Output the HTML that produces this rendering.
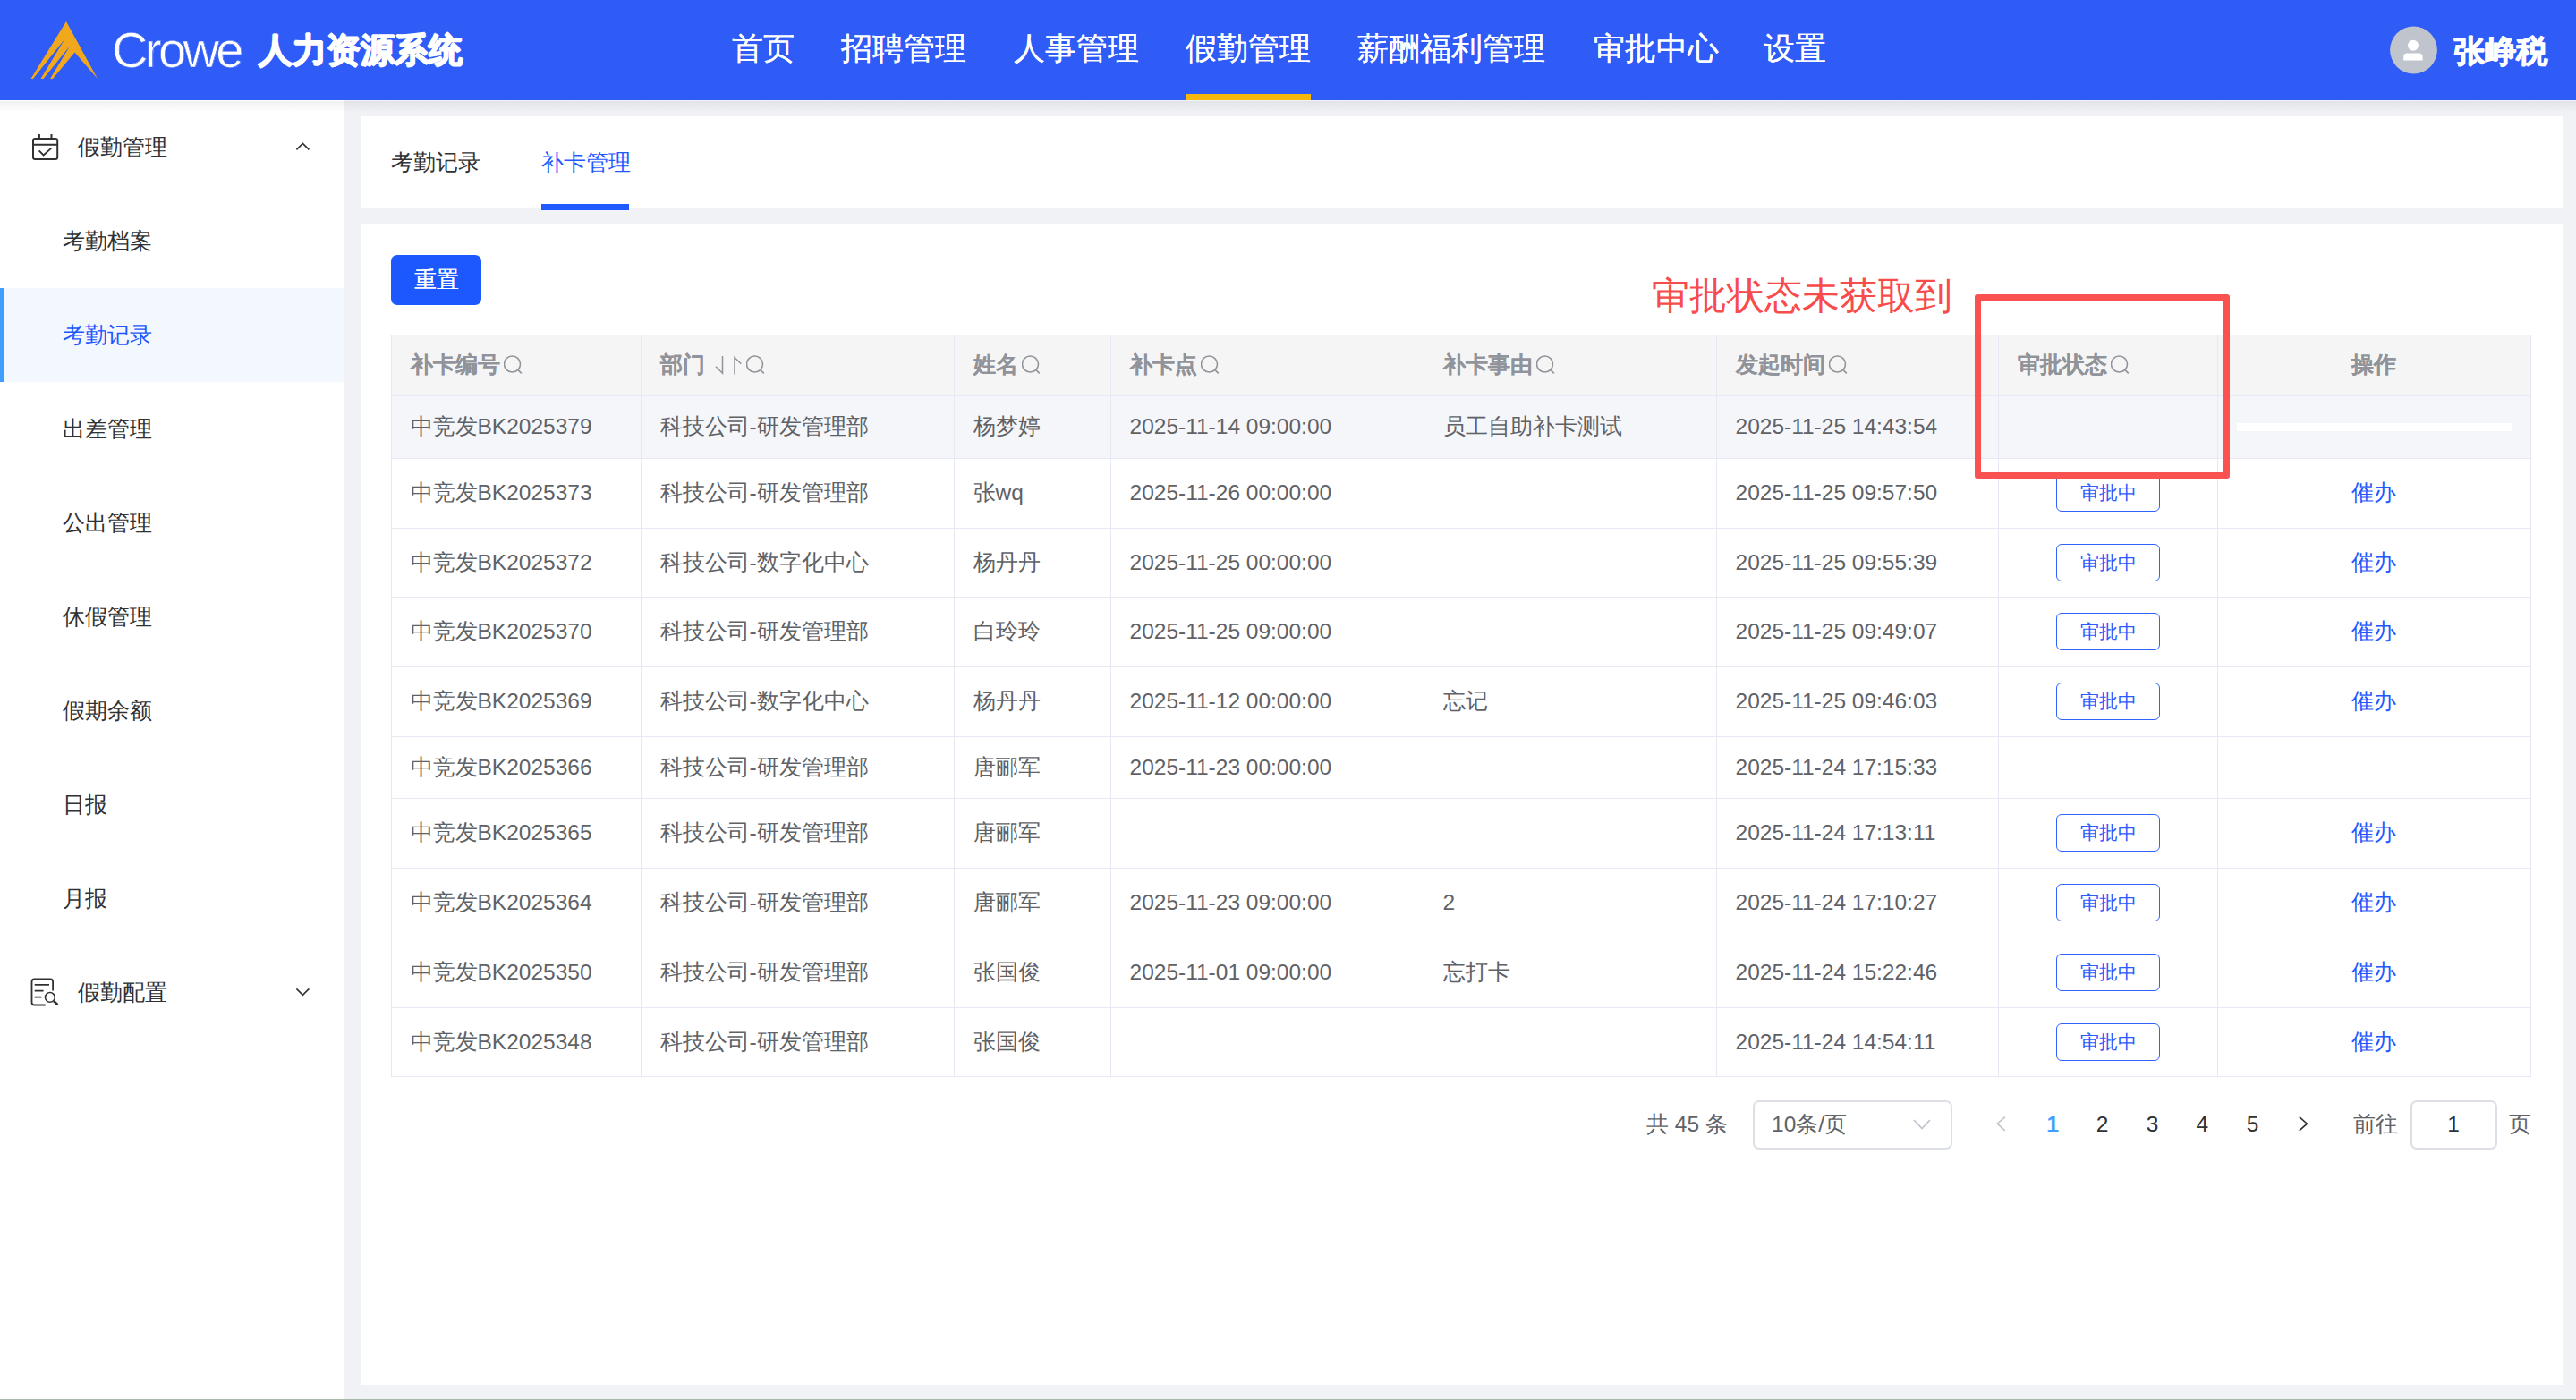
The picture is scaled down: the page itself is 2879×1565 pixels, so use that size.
<!DOCTYPE html>
<html><head><meta charset="utf-8">
<style>
*{margin:0;padding:0;box-sizing:border-box}
html,body{width:2879px;height:1565px;overflow:hidden}
body{position:relative;background:#f0f2f5;font-family:"Liberation Sans",sans-serif;color:#606266}
.abs{position:absolute}
#hdr{position:absolute;left:0;top:0;width:2879px;height:112px;background:#2f5bf6}
#hdrsh{position:absolute;left:384px;top:113px;width:2495px;height:13px;background:linear-gradient(#e2e4e8,#f0f2f5)}
#hdrsh2{position:absolute;left:0;top:113px;width:384px;height:12px;background:linear-gradient(#f0f0f0,#fff)}
.nav{position:absolute;top:0;height:112px;line-height:108px;font-size:35px;color:#fff;white-space:nowrap;text-shadow:0.3px 0 #fff}
#side{position:absolute;left:0;top:112px;width:384px;height:1453px;background:#fff}
.si{position:absolute;left:0;width:384px;height:105px;line-height:105px;font-size:24.5px;color:#303133;white-space:nowrap}
.card{position:absolute;left:403px;width:2461px;background:#fff}
.hl{position:absolute;height:1px;background:#e6e9f3}
.vl{position:absolute;width:1px;background:#e6e9f3}
.th{position:absolute;font-size:24.5px;font-weight:bold;color:#909399;white-space:nowrap;text-shadow:0.4px 0 #909399}
.th svg{position:relative;vertical-align:middle;top:-2px;margin-left:4px}
.td{position:absolute;font-size:24.5px;color:#606266;white-space:nowrap}
.lnk{color:#1f58ff}
.pg{position:absolute;top:1229px;height:55px;line-height:55px;font-size:24.5px;color:#606266;white-space:nowrap}
.pn{width:56px;text-align:center;color:#303133}
.tag{position:absolute;width:116px;height:42px;border:1px solid #2f62ff;border-radius:6px;background:#fff;color:#2c5bff;font-size:21px;line-height:40px;text-align:center}
</style></head><body>
<div id="hdr">
  <svg class="abs" style="left:0;top:0" width="120" height="112" viewBox="0 0 120 112">
    <polygon fill="#f2a81d" points="74,24 109,88 83.5,58.5 59,88 56,88 78,51.5 48.5,88 45.5,88 72.5,43.5 37,88 34.5,88"/>
  </svg>
  <div class="nav" style="left:125px;font-size:56px;letter-spacing:-3.6px;line-height:112px;-webkit-text-stroke:0.7px #2f5bf6">Crowe</div>
  <div class="nav" style="left:289px;font-size:37.5px;font-weight:bold;line-height:112px;text-shadow:0.6px 0 #fff,-0.6px 0 #fff,0 0.6px #fff,0 -0.6px #fff">人力资源系统</div>
  <div class="nav" style="left:818px">首页</div>
  <div class="nav" style="left:940px">招聘管理</div>
  <div class="nav" style="left:1133px">人事管理</div>
  <div class="nav" style="left:1325px">假勤管理</div>
  <div class="abs" style="left:1325px;top:105px;width:140px;height:7px;background:#f7b80c"></div>
  <div class="nav" style="left:1517px">薪酬福利管理</div>
  <div class="nav" style="left:1781px">审批中心</div>
  <div class="nav" style="left:1971px">设置</div>
  <svg class="abs" style="left:2670px;top:29px" width="56" height="56" viewBox="0 0 56 56"><circle cx="27.5" cy="27" r="26.4" fill="#c0c4cc"/><circle cx="27" cy="21.8" r="6" fill="#fff"/><path d="M16.2 38.5V34.5A4 4 0 0 1 20.2 30.4H33.6A4 4 0 0 1 37.6 34.5V38.5Z" fill="#fff"/></svg>
  <div class="nav" style="left:2742px;font-weight:bold;font-size:34.5px;line-height:115px;text-shadow:0.5px 0 #fff,-0.5px 0 #fff,0 0.5px #fff">张峥税</div>
</div>

<div id="side">
  <div class="si" style="top:0"><svg class="abs" style="left:25px;top:23px" width="60" height="60" viewBox="0 0 60 60"><rect x="12" y="20" width="27.2" height="23" rx="2.2" fill="none" stroke="#303133" stroke-width="2"/><path d="M12 26.8H39.2M18.9 15V20M32.5 15V20" stroke="#303133" stroke-width="2" fill="none"/><path d="M18.6 33.4L23.6 38.4L32.4 30.6" stroke="#303133" stroke-width="1.9" fill="none"/></svg><span style="position:absolute;left:87px">假勤管理</span><svg class="abs" style="left:320px;top:33px" width="40" height="40" viewBox="0 0 40 40"><path d="M11.4 22.4L18.4 15.4L25.4 22.4" stroke="#303133" stroke-width="1.6" fill="none"/></svg></div>
  <div class="si" style="top:105px"><span style="position:absolute;left:70px">考勤档案</span></div>
  <div class="si" style="top:210px;background:#f3f7fe;color:#1f56ff"><div class="abs" style="left:0;top:0;width:4px;height:105px;background:#409eff"></div><span style="position:absolute;left:70px">考勤记录</span></div>
  <div class="si" style="top:315px"><span style="position:absolute;left:70px">出差管理</span></div>
  <div class="si" style="top:420px"><span style="position:absolute;left:70px">公出管理</span></div>
  <div class="si" style="top:525px"><span style="position:absolute;left:70px">休假管理</span></div>
  <div class="si" style="top:630px"><span style="position:absolute;left:70px">假期余额</span></div>
  <div class="si" style="top:735px"><span style="position:absolute;left:70px">日报</span></div>
  <div class="si" style="top:840px"><span style="position:absolute;left:70px">月报</span></div>
  <div class="si" style="top:945px"><svg class="abs" style="left:25px;top:23px" width="60" height="60" viewBox="0 0 60 60"><path d="M34.1 27.6V17.5A3 3 0 0 0 31.1 14.5H13.5A3 3 0 0 0 10.5 17.5V40.5A3 3 0 0 0 13.5 43.5H25.7" stroke="#303133" stroke-width="1.8" fill="none"/><path d="M13.7 20.8H30M13.7 27.6H23.6M13.7 34.7H21.4" stroke="#303133" stroke-width="1.8" fill="none"/><circle cx="30.9" cy="34.9" r="5.4" fill="none" stroke="#303133" stroke-width="1.6"/><path d="M35 39L39.5 43.2" stroke="#303133" stroke-width="2.6" fill="none"/></svg><span style="position:absolute;left:87px">假勤配置</span><svg class="abs" style="left:320px;top:33px" width="40" height="40" viewBox="0 0 40 40"><path d="M11.4 15.4L18.4 22.4L25.4 15.4" stroke="#303133" stroke-width="1.6" fill="none"/></svg></div>
</div>
<div id="hdrsh"></div><div id="hdrsh2"></div>
<div class="card" style="top:130px;height:103px">
  <div class="abs" style="left:34px;top:0;height:103px;line-height:103px;font-size:24.5px;color:#303133">考勤记录</div>
  <div class="abs" style="left:202px;top:0;height:103px;line-height:103px;font-size:24.5px;color:#1f58ff">补卡管理</div>
  <div class="abs" style="left:202px;top:98px;width:98px;height:7px;background:#1f5bff"></div>
</div>
<div class="card" style="top:250px;height:1298px">
  <div class="abs" style="left:34px;top:35px;width:101px;height:56px;border-radius:7px;background:#1d57fe;color:#fff;font-size:24.5px;line-height:56px;text-align:center;text-shadow:0.5px 0 #fff">重置</div>
</div>
<div class="abs" style="left:437px;top:374px;width:2392px;height:830px;background:#fff"></div>
<div class="abs" style="left:437px;top:374px;width:2391px;height:68px;background:#f5f5f5"></div>
<div class="abs" style="left:437px;top:442px;width:2391px;height:70px;background:#f5f6fa"></div>
<div class="hl" style="top:374px;left:437px;width:2392px"></div>
<div class="hl" style="top:442px;left:437px;width:2392px"></div>
<div class="hl" style="top:512px;left:437px;width:2392px"></div>
<div class="hl" style="top:590px;left:437px;width:2392px"></div>
<div class="hl" style="top:667px;left:437px;width:2392px"></div>
<div class="hl" style="top:745px;left:437px;width:2392px"></div>
<div class="hl" style="top:823px;left:437px;width:2392px"></div>
<div class="hl" style="top:892px;left:437px;width:2392px"></div>
<div class="hl" style="top:970px;left:437px;width:2392px"></div>
<div class="hl" style="top:1048px;left:437px;width:2392px"></div>
<div class="hl" style="top:1126px;left:437px;width:2392px"></div>
<div class="hl" style="top:1203px;left:437px;width:2392px"></div>
<div class="vl" style="left:437px;top:374px;height:830px"></div>
<div class="vl" style="left:716px;top:374px;height:830px"></div>
<div class="vl" style="left:1066px;top:374px;height:830px"></div>
<div class="vl" style="left:1241px;top:374px;height:830px"></div>
<div class="vl" style="left:1591px;top:374px;height:830px"></div>
<div class="vl" style="left:1918px;top:374px;height:830px"></div>
<div class="vl" style="left:2233px;top:374px;height:830px"></div>
<div class="vl" style="left:2478px;top:374px;height:830px"></div>
<div class="vl" style="left:2828px;top:374px;height:830px"></div>
<div class="th" style="left:458.5px;top:374px;height:68px;line-height:68px">补卡编号<svg class="srch" width="22" height="24" viewBox="0 0 22 24"><circle cx="9.5" cy="11" r="9" fill="none" stroke="#909399" stroke-width="1.55"/><path d="M16 17.6 L19.8 21.3" stroke="#909399" stroke-width="1.7" fill="none"/></svg></div>
<div class="th" style="left:737.5px;top:374px;height:68px;line-height:68px">部门<svg class="sort" width="38" height="24" viewBox="0 0 38 24"><path d="M15.5 2 V21.3 L8 13.8" stroke="#909399" stroke-width="1.5" fill="none"/><path d="M29 22.5 V3.5 L36.3 10.8" stroke="#909399" stroke-width="1.5" fill="none"/></svg><svg class="srch" width="22" height="24" viewBox="0 0 22 24"><circle cx="9.5" cy="11" r="9" fill="none" stroke="#909399" stroke-width="1.55"/><path d="M16 17.6 L19.8 21.3" stroke="#909399" stroke-width="1.7" fill="none"/></svg></div>
<div class="th" style="left:1087.5px;top:374px;height:68px;line-height:68px">姓名<svg class="srch" width="22" height="24" viewBox="0 0 22 24"><circle cx="9.5" cy="11" r="9" fill="none" stroke="#909399" stroke-width="1.55"/><path d="M16 17.6 L19.8 21.3" stroke="#909399" stroke-width="1.7" fill="none"/></svg></div>
<div class="th" style="left:1262.5px;top:374px;height:68px;line-height:68px">补卡点<svg class="srch" width="22" height="24" viewBox="0 0 22 24"><circle cx="9.5" cy="11" r="9" fill="none" stroke="#909399" stroke-width="1.55"/><path d="M16 17.6 L19.8 21.3" stroke="#909399" stroke-width="1.7" fill="none"/></svg></div>
<div class="th" style="left:1612.5px;top:374px;height:68px;line-height:68px">补卡事由<svg class="srch" width="22" height="24" viewBox="0 0 22 24"><circle cx="9.5" cy="11" r="9" fill="none" stroke="#909399" stroke-width="1.55"/><path d="M16 17.6 L19.8 21.3" stroke="#909399" stroke-width="1.7" fill="none"/></svg></div>
<div class="th" style="left:1939.5px;top:374px;height:68px;line-height:68px">发起时间<svg class="srch" width="22" height="24" viewBox="0 0 22 24"><circle cx="9.5" cy="11" r="9" fill="none" stroke="#909399" stroke-width="1.55"/><path d="M16 17.6 L19.8 21.3" stroke="#909399" stroke-width="1.7" fill="none"/></svg></div>
<div class="th" style="left:2254.5px;top:374px;height:68px;line-height:68px">审批状态<svg class="srch" width="22" height="24" viewBox="0 0 22 24"><circle cx="9.5" cy="11" r="9" fill="none" stroke="#909399" stroke-width="1.55"/><path d="M16 17.6 L19.8 21.3" stroke="#909399" stroke-width="1.7" fill="none"/></svg></div>
<div class="th" style="left:2478px;width:350px;top:374px;height:68px;line-height:68px;text-align:center">操作</div>
<div class="td" style="left:458.5px;top:442px;height:70px;line-height:70px">中竞发BK2025379</div>
<div class="td" style="left:737.5px;top:442px;height:70px;line-height:70px">科技公司-研发管理部</div>
<div class="td" style="left:1087.5px;top:442px;height:70px;line-height:70px">杨梦婷</div>
<div class="td" style="left:1262.5px;top:442px;height:70px;line-height:70px">2025-11-14 09:00:00</div>
<div class="td" style="left:1612.5px;top:442px;height:70px;line-height:70px">员工自助补卡测试</div>
<div class="td" style="left:1939.5px;top:442px;height:70px;line-height:70px">2025-11-25 14:43:54</div>
<div class="abs" style="left:2500px;top:473px;width:307px;height:9px;background:#fff"></div>
<div class="td" style="left:458.5px;top:512px;height:78px;line-height:78px">中竞发BK2025373</div>
<div class="td" style="left:737.5px;top:512px;height:78px;line-height:78px">科技公司-研发管理部</div>
<div class="td" style="left:1087.5px;top:512px;height:78px;line-height:78px">张wq</div>
<div class="td" style="left:1262.5px;top:512px;height:78px;line-height:78px">2025-11-26 00:00:00</div>
<div class="td" style="left:1939.5px;top:512px;height:78px;line-height:78px">2025-11-25 09:57:50</div>
<div class="tag" style="left:2298px;top:530.0px">审批中</div>
<div class="td lnk" style="left:2478px;width:350px;top:512px;height:78px;line-height:78px;text-align:center">催办</div>
<div class="td" style="left:458.5px;top:590px;height:77px;line-height:77px">中竞发BK2025372</div>
<div class="td" style="left:737.5px;top:590px;height:77px;line-height:77px">科技公司-数字化中心</div>
<div class="td" style="left:1087.5px;top:590px;height:77px;line-height:77px">杨丹丹</div>
<div class="td" style="left:1262.5px;top:590px;height:77px;line-height:77px">2025-11-25 00:00:00</div>
<div class="td" style="left:1939.5px;top:590px;height:77px;line-height:77px">2025-11-25 09:55:39</div>
<div class="tag" style="left:2298px;top:607.5px">审批中</div>
<div class="td lnk" style="left:2478px;width:350px;top:590px;height:77px;line-height:77px;text-align:center">催办</div>
<div class="td" style="left:458.5px;top:667px;height:78px;line-height:78px">中竞发BK2025370</div>
<div class="td" style="left:737.5px;top:667px;height:78px;line-height:78px">科技公司-研发管理部</div>
<div class="td" style="left:1087.5px;top:667px;height:78px;line-height:78px">白玲玲</div>
<div class="td" style="left:1262.5px;top:667px;height:78px;line-height:78px">2025-11-25 09:00:00</div>
<div class="td" style="left:1939.5px;top:667px;height:78px;line-height:78px">2025-11-25 09:49:07</div>
<div class="tag" style="left:2298px;top:685.0px">审批中</div>
<div class="td lnk" style="left:2478px;width:350px;top:667px;height:78px;line-height:78px;text-align:center">催办</div>
<div class="td" style="left:458.5px;top:745px;height:78px;line-height:78px">中竞发BK2025369</div>
<div class="td" style="left:737.5px;top:745px;height:78px;line-height:78px">科技公司-数字化中心</div>
<div class="td" style="left:1087.5px;top:745px;height:78px;line-height:78px">杨丹丹</div>
<div class="td" style="left:1262.5px;top:745px;height:78px;line-height:78px">2025-11-12 00:00:00</div>
<div class="td" style="left:1612.5px;top:745px;height:78px;line-height:78px">忘记</div>
<div class="td" style="left:1939.5px;top:745px;height:78px;line-height:78px">2025-11-25 09:46:03</div>
<div class="tag" style="left:2298px;top:763.0px">审批中</div>
<div class="td lnk" style="left:2478px;width:350px;top:745px;height:78px;line-height:78px;text-align:center">催办</div>
<div class="td" style="left:458.5px;top:823px;height:69px;line-height:69px">中竞发BK2025366</div>
<div class="td" style="left:737.5px;top:823px;height:69px;line-height:69px">科技公司-研发管理部</div>
<div class="td" style="left:1087.5px;top:823px;height:69px;line-height:69px">唐郦军</div>
<div class="td" style="left:1262.5px;top:823px;height:69px;line-height:69px">2025-11-23 00:00:00</div>
<div class="td" style="left:1939.5px;top:823px;height:69px;line-height:69px">2025-11-24 17:15:33</div>
<div class="td" style="left:458.5px;top:892px;height:78px;line-height:78px">中竞发BK2025365</div>
<div class="td" style="left:737.5px;top:892px;height:78px;line-height:78px">科技公司-研发管理部</div>
<div class="td" style="left:1087.5px;top:892px;height:78px;line-height:78px">唐郦军</div>
<div class="td" style="left:1939.5px;top:892px;height:78px;line-height:78px">2025-11-24 17:13:11</div>
<div class="tag" style="left:2298px;top:910.0px">审批中</div>
<div class="td lnk" style="left:2478px;width:350px;top:892px;height:78px;line-height:78px;text-align:center">催办</div>
<div class="td" style="left:458.5px;top:970px;height:78px;line-height:78px">中竞发BK2025364</div>
<div class="td" style="left:737.5px;top:970px;height:78px;line-height:78px">科技公司-研发管理部</div>
<div class="td" style="left:1087.5px;top:970px;height:78px;line-height:78px">唐郦军</div>
<div class="td" style="left:1262.5px;top:970px;height:78px;line-height:78px">2025-11-23 09:00:00</div>
<div class="td" style="left:1612.5px;top:970px;height:78px;line-height:78px">2</div>
<div class="td" style="left:1939.5px;top:970px;height:78px;line-height:78px">2025-11-24 17:10:27</div>
<div class="tag" style="left:2298px;top:988.0px">审批中</div>
<div class="td lnk" style="left:2478px;width:350px;top:970px;height:78px;line-height:78px;text-align:center">催办</div>
<div class="td" style="left:458.5px;top:1048px;height:78px;line-height:78px">中竞发BK2025350</div>
<div class="td" style="left:737.5px;top:1048px;height:78px;line-height:78px">科技公司-研发管理部</div>
<div class="td" style="left:1087.5px;top:1048px;height:78px;line-height:78px">张国俊</div>
<div class="td" style="left:1262.5px;top:1048px;height:78px;line-height:78px">2025-11-01 09:00:00</div>
<div class="td" style="left:1612.5px;top:1048px;height:78px;line-height:78px">忘打卡</div>
<div class="td" style="left:1939.5px;top:1048px;height:78px;line-height:78px">2025-11-24 15:22:46</div>
<div class="tag" style="left:2298px;top:1066.0px">审批中</div>
<div class="td lnk" style="left:2478px;width:350px;top:1048px;height:78px;line-height:78px;text-align:center">催办</div>
<div class="td" style="left:458.5px;top:1126px;height:77px;line-height:77px">中竞发BK2025348</div>
<div class="td" style="left:737.5px;top:1126px;height:77px;line-height:77px">科技公司-研发管理部</div>
<div class="td" style="left:1087.5px;top:1126px;height:77px;line-height:77px">张国俊</div>
<div class="td" style="left:1939.5px;top:1126px;height:77px;line-height:77px">2025-11-24 14:54:11</div>
<div class="tag" style="left:2298px;top:1143.5px">审批中</div>
<div class="td lnk" style="left:2478px;width:350px;top:1126px;height:77px;line-height:77px;text-align:center">催办</div>
<div class="abs" style="left:0;top:1564px;width:2879px;height:1px;background:#a6bbab"></div>
<div class="abs" style="left:1846px;top:296px;font-size:42px;line-height:70px;color:#f84b4b;white-space:nowrap">审批状态未获取到</div>
<div class="abs" style="left:2207px;top:329px;width:284.5px;height:206px;border:7px solid #fa5151;border-radius:3px"></div>
<div class="pg" style="left:1840px">共 45 条</div>
<div class="abs" style="left:1958.5px;top:1229.5px;width:223px;height:55px;border:2px solid #dcdfe6;border-radius:7px"></div>
<div class="pg" style="left:1980px">10条/页</div>
<svg class="abs" style="left:2130px;top:1240px" width="40" height="30" viewBox="0 0 40 30"><path d="M9 12L18 21.5L27 12" stroke="#c0c4cc" stroke-width="1.8" fill="none"/></svg>
<svg class="abs" style="left:2220px;top:1240px" width="30" height="30" viewBox="0 0 30 30"><path d="M20.8 8.7L12.2 16.2L20.8 23.8" stroke="#c0c4cc" stroke-width="1.6" fill="none"/></svg>
<div class="pg pn" style="left:2265.6px;color:#409eff;text-shadow:0.7px 0 #409eff,1.2px 0 #409eff">1</div>
<div class="pg pn" style="left:2321.6px">2</div>
<div class="pg pn" style="left:2377.6px">3</div>
<div class="pg pn" style="left:2433.4px">4</div>
<div class="pg pn" style="left:2489.7px">5</div>
<svg class="abs" style="left:2560px;top:1240px" width="30" height="30" viewBox="0 0 30 30"><path d="M9.8 8.7L18.4 16.2L9.8 23.8" stroke="#303133" stroke-width="1.6" fill="none"/></svg>
<div class="pg" style="left:2630px">前往</div>
<div class="abs" style="left:2693.5px;top:1229.5px;width:97px;height:55px;border:2px solid #dcdfe6;border-radius:7px"></div>
<div class="pg pn" style="left:2714px">1</div>
<div class="pg" style="left:2804px">页</div>

</body></html>
